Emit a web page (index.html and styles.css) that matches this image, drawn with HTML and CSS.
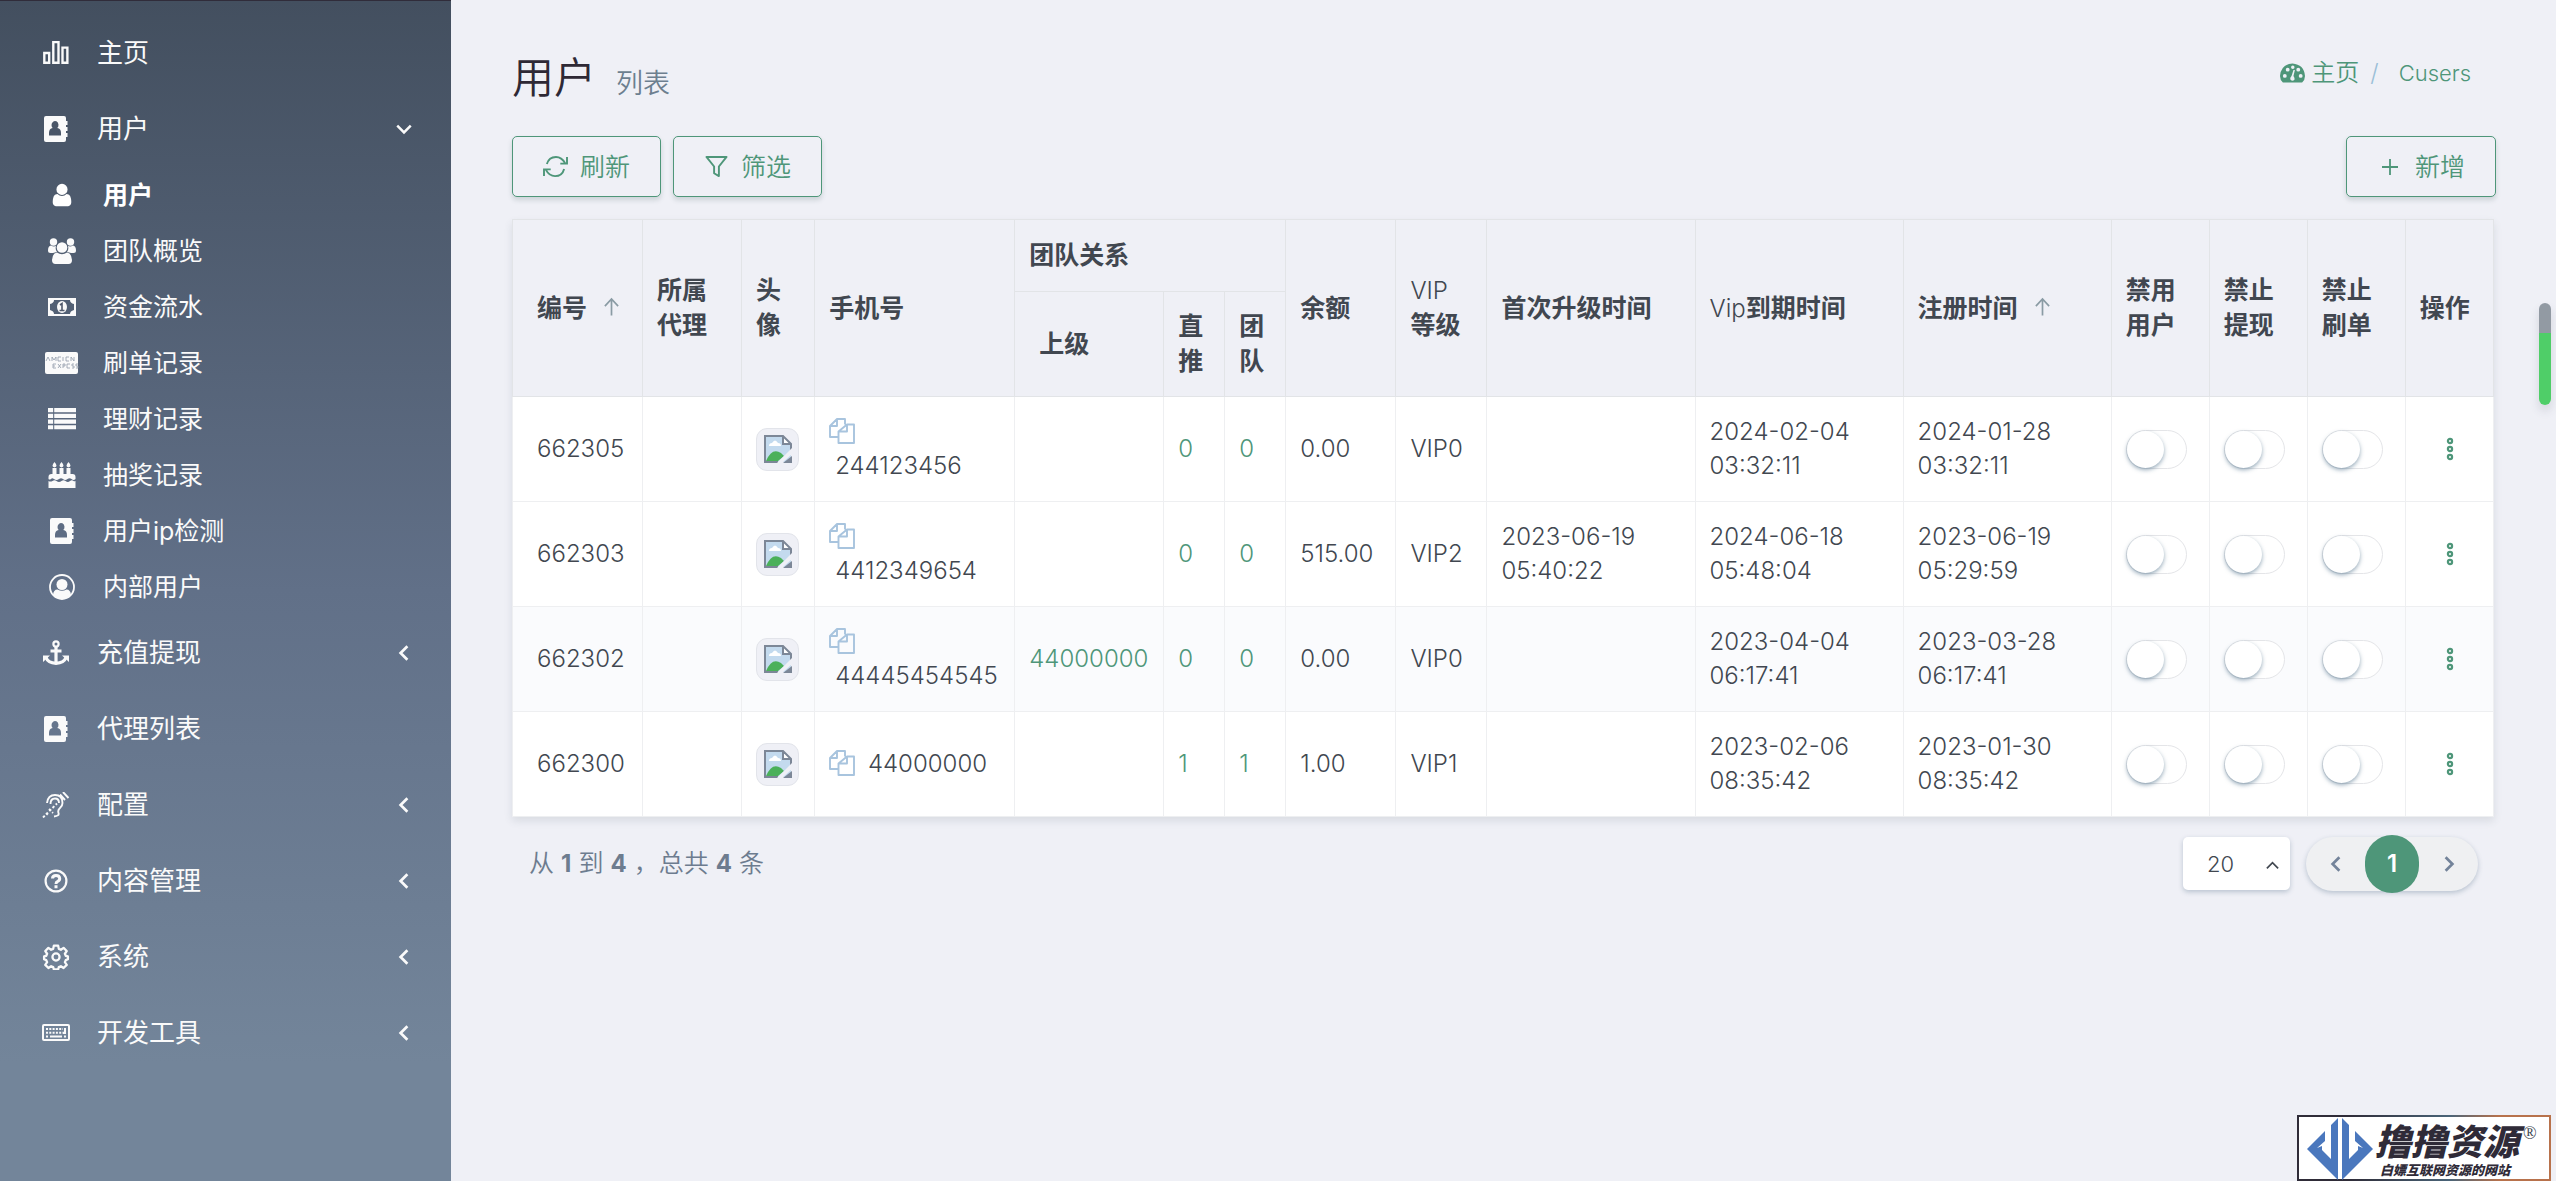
FILE: index.html
```html
<!DOCTYPE html>
<html lang="zh-CN">
<head>
<meta charset="utf-8">
<title>用户</title>
<link rel="stylesheet" href="styles.css">
</head>
<body>
<svg class="sprite" aria-hidden="true">
  <symbol id="i-chart" viewBox="0 0 24 24"><g fill="none" stroke="currentColor" stroke-width="2.200"><path d="M1.200 12h4.500v9H1.200zM9.500 2h4.800v19H9.500zM18 7h4.500v14H18z"/></g></symbol>
  <symbol id="i-book" viewBox="0 0 26 26"><path fill="currentColor" fill-rule="evenodd" d="M3 0h18q2 0 2 2v3h1.500v4H23v2h1.500v4H23v2h1.500v4H23v3q0 2-2 2H3q-2 0-2-2V2Q1 0 3 0zM8.500 9a3.500 4 0 0 0 1.200 3Q6 12.500 6 17v2.500h12V17q0-4.500-3.700-5A3.500 4 0 1 0 8.500 9z"/></symbol>
  <symbol id="i-user" viewBox="0 0 1792 1792"><path fill="currentColor" d="M1536 1399q0 109-62.500 187t-150.500 78h-854q-88 0-150.500-78t-62.500-187q0-85 8.500-160.500t31.500-152 58.500-131 94-89 134.500-34.500q131 128 313 128t313-128q76 0 134.500 34.500t94 89 58.500 131 31.500 152 8.500 160.500zm-256-887q0 159-112.500 271.500t-271.500 112.500-271.500-112.500-112.500-271.500 112.500-271.500 271.500-112.500 271.500 112.500 112.500 271.500z"/></symbol>
  <symbol id="i-users" viewBox="0 0 28 26"><g fill="currentColor"><circle cx="5.500" cy="4" r="3.700"/><circle cx="22.500" cy="4" r="3.700"/><circle cx="14" cy="9.500" r="5.300"/><path d="M3 7.500q2.500 1.500 5 .5-1 3.500 1 6Q6.500 14.500 5 15H2.500Q0 15 0 12.500 0 8 3 7.500zM25 7.500q-2.500 1.500-5 .5 1 3.500-1 6 2.500.5 4 1h2.500Q28 15 28 12.500 28 8 25 7.500zM9 14.500q5 3.500 10 0 4.500.5 5 7.500 0 4-3.500 4h-13Q4 26 4 22q.5-7 5-7.500z"/></g></symbol>
  <symbol id="i-money" viewBox="0 0 28 20"><path fill="currentColor" fill-rule="evenodd" d="M0 1h28v18H0zM6 3q0 3-4 4v6q4 1 4 4h16q0-3 4-4V7q-4-1-4-4z"/><ellipse cx="14" cy="10" rx="5" ry="6" fill="currentColor"/><path d="M11.500 13.500h5M14 13V6.500l-2 1.500" stroke="#50596b" stroke-width="1.600" fill="none"/></symbol>
  <symbol id="i-card" viewBox="0 0 34 22"><rect width="33" height="22" rx="2" fill="currentColor"/><path d="M1 9l2-4 2 4M7 9V5l2 3 2-3v4M16 5h-3v4h3M18 5v4M24 5h-3v4h3M26 9V5l3 4V5M8 16v-4h3M8 14h2M8 16h3M13 12l3 4M16 12l-3 4M18 16v-4h2v2h-2M25 12h-3v4h3M29 12h-2v2h2v2h-2M33 12h-2v2h2v2h-2" stroke="#8f9aa8" fill="none" stroke-width=".8"/></symbol>
  <symbol id="i-list" viewBox="0 0 27 21"><path fill="currentColor" d="M0 0h5v4H0zM6 0h21v4H6zM0 5.500h5v4H0zM6 5.500h21v4H6zM0 11h5v4H0zM6 11h21v4H6zM0 16.500h5v4H0zM6 16.500h21v4H6z"/></symbol>
  <symbol id="i-cake" viewBox="0 0 27 26"><path fill="currentColor" d="M4 6h4v6h3V6h4v6h3V6h4v6h2q3 0 3 3v2q-2 2-4 0-2-1.500-4 0-2.500 2-4.500 0-2-1.500-4 0-2.500 2-5 0-2-1.500-3 0-1.500 1-2.500 0v-2q0-3 3-3h1zM0 19q2 1 4 0 2-1.500 4 0 2.500 2 5 0 2-1.500 4 0 2.500 2 4.500 0 2-1.500 3.500 0 1 .5 2 0v7H0zM6 0q4 4.500 0 5.500Q2 4.500 6 0zM13 0q4 4.500 0 5.500Q9 4.500 13 0zM20 0q4 4.500 0 5.500-4-1 0-5.500z"/></symbol>
  <symbol id="i-circle" viewBox="0 0 26 26"><circle cx="13" cy="13" r="12" fill="none" stroke="currentColor" stroke-width="1.800"/><circle cx="13" cy="10.500" r="5.500" fill="currentColor"/><path fill="currentColor" d="M4 21q.5-5.500 4.500-5.500 4.500 2.500 9 0 4 0 4.500 5.500-4 4-9 4t-9-4z"/></symbol>
  <symbol id="i-anchor" viewBox="0 0 26 26"><g fill="none" stroke="currentColor" stroke-width="3.200"><circle cx="13" cy="4" r="2.600" stroke-width="2.200"/><path d="M13 7v16M7.500 11h11M3 17.500q2 5.500 10 5.800 8-.3 10-5.800"/></g><path fill="currentColor" d="M0 15.500h7L0 22zM26 15.500h-7l7 6.500z"/></symbol>
  <symbol id="i-ear" viewBox="0 0 26 26"><g fill="none" stroke="currentColor" stroke-width="1.900"><path d="M4 11q1-8 8-8 7.500 0 7.500 8 0 3-2.500 5t-1.500 5-4.500 3.500M7.500 12q0-5.500 4.500-5.500 4 0 4 4.500M17 2.500l5 5.500M20 0l5.500 6"/><path stroke-dasharray="2.500 2" d="M0 25.500L14 11.500M6 17l4 4M3 21l3 3"/></g></symbol>
  <symbol id="i-help" viewBox="0 0 26 26"><g fill="none" stroke="currentColor"><circle cx="13" cy="13" r="10.400" stroke-width="2.200"/><path d="M9.500 10.500q0-3 3.500-3t3.700 3q0 2-2 2.800-1.700.7-1.700 2.700M13 17.300v3" stroke-width="3"/></g></symbol>
  <symbol id="i-gear" viewBox="0 0 24 24"><g fill="none" stroke="currentColor" stroke-width="2.100" stroke-linejoin="round"><circle cx="12" cy="12" r="3.300"/><path d="M10 1.500h4l.6 3 1.900.8 2.500-1.700 2.900 2.900-1.700 2.500.8 1.900 2 .6v2.500l-2 .9-.8 1.900 1.700 2.500-2.900 2.900-2.500-1.700-1.900.8-.6 2.200h-4l-.6-2.200-1.900-.8L5 22.200l-2.900-2.900 1.700-2.500-.8-1.900-2-.9v-2.500l2-.6.8-1.900L2.100 6.500 5 3.600l2.500 1.700 1.900-.8z"/></g></symbol>
  <symbol id="i-keys" viewBox="0 0 28 18"><rect x="1" y="1" width="26" height="15" rx="1" fill="none" stroke="currentColor" stroke-width="2"/><path stroke="currentColor" stroke-width="2" stroke-dasharray="2 1.300" d="M4 5h17M4 8.700h18M4 12.500h3M22 12.500h2.500"/><path stroke="currentColor" stroke-width="2" fill="none" d="M8 12.500h12M23 4v5h-2"/></symbol>
  <symbol id="i-down" viewBox="0 0 16 16"><path d="M2 5l6 6 6-6" fill="none" stroke="currentColor" stroke-width="2.200"/></symbol>
  <symbol id="i-up" viewBox="0 0 16 16"><path d="M2 11l6-6 6 6" fill="none" stroke="currentColor" stroke-width="1.800"/></symbol>
  <symbol id="i-left" viewBox="0 0 16 16"><path d="M11 2L5 8l6 6" fill="none" stroke="currentColor" stroke-width="2.400"/></symbol>
  <symbol id="i-right" viewBox="0 0 16 16"><path d="M5 2l6 6-6 6" fill="none" stroke="currentColor" stroke-width="2.400"/></symbol>
  <symbol id="i-sort" viewBox="0 0 18 20"><path d="M9 19V1.500M2 9l7-7.500L16 9" fill="none" stroke="currentColor" stroke-width="1.800"/></symbol>
  <symbol id="i-refresh" viewBox="0 0 26 24"><path d="M4 9.500Q6 2 13.500 2q6 0 9.500 6.500M25 2v7h-7M22 14.500Q20 22 12.500 22q-6 0-9.500-6.500M1 22v-7h7" fill="none" stroke="currentColor" stroke-width="2"/></symbol>
  <symbol id="i-filter" viewBox="0 0 24 24"><path d="M1.500 2h21l-8 10v10l-5-3v-7z" fill="none" stroke="currentColor" stroke-width="2" stroke-linejoin="round"/></symbol>
  <symbol id="i-plus" viewBox="0 0 18 18"><path d="M9 1v16M1 9h16" stroke="currentColor" stroke-width="1.800"/></symbol>
  <symbol id="i-dash" viewBox="0 0 26 20"><path fill="currentColor" fill-rule="evenodd" d="M3 20Q0 17 0 13 1 1 13 0q12 1 13 13 0 4-3 7zM3 13a2 2 0 1 0 4 0 2 2 0 1 0-4 0zM6 6.500a2 2 0 1 0 4 0 2 2 0 1 0-4 0zM11.500 4a1.800 1.800 0 1 0 3.600 0 1.800 1.800 0 1 0-3.600 0zM17 6.500a2 2 0 1 0 4 0 2 2 0 1 0-4 0zM19.500 13a2 2 0 1 0 4 0 2 2 0 1 0-4 0zM14 7l-2 6q-2 2-1 4 2 2 4 0 .5-2-1-4l1.500-6z"/></symbol>
  <symbol id="i-copy" viewBox="0 0 26 26"><g fill="none" stroke="currentColor" stroke-width="1.900" stroke-linejoin="round"><path d="M9.500 19H1V8l7-7h8v5.500M8 1v7H1M18 6.500h7V25H9.500V13.500zM18 6.500v7H9.500"/></g></symbol>
  <symbol id="i-dots" viewBox="0 0 8 24"><g fill="none" stroke="currentColor" stroke-width="2.200"><circle cx="4" cy="4" r="2.100"/><circle cx="4" cy="12" r="2.100"/><circle cx="4" cy="20" r="2.100"/></g></symbol>
  <symbol id="i-broken" viewBox="0 0 28 28"><path fill="#c3daee" d="M1 1h18l8 8v18H1z"/><path fill="#4bb05a" d="M2 26q6-14 15-8l3 3-6 5z"/><path fill="#fff" d="M5 11q0-3 3-3 3-5 6 0 3 0 3 3zM19 1v8h8z"/><path fill="none" stroke="#7c8797" stroke-width="2" d="M14 27H1V1h18l8 8v6M19 1v8h8"/><path fill="#7c8797" d="M28 21v7h-9z"/><path fill="#eff0f6" d="M28 13v6l-10 9h-5z"/></symbol>
</svg>
<div class="app">
  <nav class="sidebar" aria-label="主菜单">
    <a class="item" href="#"><svg class="icon"><use href="#i-chart"/></svg><span>主页</span></a>
    <a class="item" href="#"><svg class="icon"><use href="#i-book"/></svg><span>用户</span><svg class="arrow"><use href="#i-down"/></svg></a>
    <a class="item sub active" href="#"><svg class="icon"><use href="#i-user"/></svg><span>用户</span></a>
    <a class="item sub" href="#"><svg class="icon"><use href="#i-users"/></svg><span>团队概览</span></a>
    <a class="item sub" href="#"><svg class="icon"><use href="#i-money"/></svg><span>资金流水</span></a>
    <a class="item sub" href="#"><svg class="icon wide"><use href="#i-card"/></svg><span>刷单记录</span></a>
    <a class="item sub" href="#"><svg class="icon"><use href="#i-list"/></svg><span>理财记录</span></a>
    <a class="item sub" href="#"><svg class="icon"><use href="#i-cake"/></svg><span>抽奖记录</span></a>
    <a class="item sub" href="#"><svg class="icon"><use href="#i-book"/></svg><span>用户ip检测</span></a>
    <a class="item sub" href="#"><svg class="icon"><use href="#i-circle"/></svg><span>内部用户</span></a>
    <a class="item" href="#"><svg class="icon"><use href="#i-anchor"/></svg><span>充值提现</span><svg class="arrow"><use href="#i-left"/></svg></a>
    <a class="item" href="#"><svg class="icon"><use href="#i-book"/></svg><span>代理列表</span></a>
    <a class="item" href="#"><svg class="icon"><use href="#i-ear"/></svg><span>配置</span><svg class="arrow"><use href="#i-left"/></svg></a>
    <a class="item" href="#"><svg class="icon"><use href="#i-help"/></svg><span>内容管理</span><svg class="arrow"><use href="#i-left"/></svg></a>
    <a class="item" href="#"><svg class="icon"><use href="#i-gear"/></svg><span>系统</span><svg class="arrow"><use href="#i-left"/></svg></a>
    <a class="item" href="#"><svg class="icon"><use href="#i-keys"/></svg><span>开发工具</span><svg class="arrow"><use href="#i-left"/></svg></a>
  </nav>
  <main class="content">
    <header class="page-head">
      <h1>用户<small>列表</small></h1>
      <div class="crumbs"><a href="#"><svg class="dash"><use href="#i-dash"/></svg>主页</a><span class="slash">/</span><a href="#">Cusers</a></div>
    </header>
    <div class="toolbar">
      <button class="btn" type="button"><svg><use href="#i-refresh"/></svg>刷新</button>
      <button class="btn" type="button"><svg><use href="#i-filter"/></svg>筛选</button>
      <button class="btn add" type="button"><svg><use href="#i-plus"/></svg>新增</button>
    </div>
    <table class="grid">
      <colgroup><col class="w130"><col class="w99"><col class="w73"><col class="w200"><col class="w149"><col class="w61"><col class="w61"><col class="w110"><col class="w91"><col class="w208"><col class="w208"><col class="w208"><col class="w98"><col class="w98"><col class="w98"><col class="w88"></colgroup>
      <thead>
        <tr class="h1"><th rowspan="2">编号<svg class="sort"><use href="#i-sort"/></svg></th><th rowspan="2">所属代理</th><th rowspan="2">头像</th><th rowspan="2">手机号</th><th colspan="3">团队关系</th><th rowspan="2">余额</th><th rowspan="2"><span class="latin">VIP</span><br>等级</th><th rowspan="2">首次升级时间</th><th rowspan="2"><span class="latin">Vip</span>到期时间</th><th rowspan="2">注册时间<svg class="sort"><use href="#i-sort"/></svg></th><th rowspan="2">禁用用户</th><th rowspan="2">禁止提现</th><th rowspan="2">禁止刷单</th><th rowspan="2">操作</th></tr>
        <tr class="h2"><th class="parent">上级</th><th>直推</th><th>团队</th></tr>
      </thead>
      <tbody>
        <tr><td>662305</td><td></td><td><span class="avatar"><svg><use href="#i-broken"/></svg></span></td><td><a class="copy" href="#" aria-label="复制"><svg><use href="#i-copy"/></svg></a><br><span class="phone">244123456</span></td><td></td><td><a href="#">0</a></td><td><a href="#">0</a></td><td>0.00</td><td>VIP0</td><td></td><td>2024-02-04 03:32:11</td><td>2024-01-28 03:32:11</td><td><input type="checkbox" class="switch" aria-label="禁用用户"></td><td><input type="checkbox" class="switch" aria-label="禁止提现"></td><td><input type="checkbox" class="switch" aria-label="禁止刷单"></td><td><button class="more" type="button" aria-label="操作"><svg><use href="#i-dots"/></svg></button></td></tr>
        <tr><td>662303</td><td></td><td><span class="avatar"><svg><use href="#i-broken"/></svg></span></td><td><a class="copy" href="#" aria-label="复制"><svg><use href="#i-copy"/></svg></a><br><span class="phone">4412349654</span></td><td></td><td><a href="#">0</a></td><td><a href="#">0</a></td><td>515.00</td><td>VIP2</td><td>2023-06-19 05:40:22</td><td>2024-06-18 05:48:04</td><td>2023-06-19 05:29:59</td><td><input type="checkbox" class="switch" aria-label="禁用用户"></td><td><input type="checkbox" class="switch" aria-label="禁止提现"></td><td><input type="checkbox" class="switch" aria-label="禁止刷单"></td><td><button class="more" type="button" aria-label="操作"><svg><use href="#i-dots"/></svg></button></td></tr>
        <tr class="hover"><td>662302</td><td></td><td><span class="avatar"><svg><use href="#i-broken"/></svg></span></td><td><a class="copy" href="#" aria-label="复制"><svg><use href="#i-copy"/></svg></a><br><span class="phone">44445454545</span></td><td><a href="#">44000000</a></td><td><a href="#">0</a></td><td><a href="#">0</a></td><td>0.00</td><td>VIP0</td><td></td><td>2023-04-04 06:17:41</td><td>2023-03-28 06:17:41</td><td><input type="checkbox" class="switch" aria-label="禁用用户"></td><td><input type="checkbox" class="switch" aria-label="禁止提现"></td><td><input type="checkbox" class="switch" aria-label="禁止刷单"></td><td><button class="more" type="button" aria-label="操作"><svg><use href="#i-dots"/></svg></button></td></tr>
        <tr><td>662300</td><td></td><td><span class="avatar"><svg><use href="#i-broken"/></svg></span></td><td><a class="copy" href="#" aria-label="复制"><svg><use href="#i-copy"/></svg></a> <span class="phone">44000000</span></td><td></td><td><a href="#">1</a></td><td><a href="#">1</a></td><td>1.00</td><td>VIP1</td><td></td><td>2023-02-06 08:35:42</td><td>2023-01-30 08:35:42</td><td><input type="checkbox" class="switch" aria-label="禁用用户"></td><td><input type="checkbox" class="switch" aria-label="禁止提现"></td><td><input type="checkbox" class="switch" aria-label="禁止刷单"></td><td><button class="more" type="button" aria-label="操作"><svg><use href="#i-dots"/></svg></button></td></tr>
      </tbody>
    </table>
    <footer class="table-foot">
      <p>从 <b>1</b> 到 <b>4</b> ，总共 <b>4</b> 条</p>
      <div class="per-page"><select aria-label="每页条数"><option>20</option></select><svg><use href="#i-up"/></svg></div>
      <div class="pager"><button type="button" aria-label="上一页"><svg><use href="#i-left"/></svg></button><button type="button" class="current">1</button><button type="button" aria-label="下一页"><svg><use href="#i-right"/></svg></button></div>
    </footer>
  </main>
</div>
<div class="scroll-mark"></div>
<aside class="brand">
  <svg class="brand-logo" viewBox="0 0 66 62"><g fill="#4a77bd"><path d="M31 0v62L0 31l18-18v10l-8 7 5-2v4l9 9V7zM35 0v62l31-31-18-18v10l8 7-5-2v4l-9 9V7z"/></g></svg>
  <div class="brand-text"><strong>撸撸资源</strong><em>白嫖互联网资源的网站</em></div>
  <span class="reg">®</span>
</aside>
</body>
</html>
```
FILE: styles.css
```css
* { box-sizing: border-box; }
body { margin: 0; background: #eff0f6; color: #414750; font: 24px/34px Inter, "Noto Sans CJK SC", sans-serif; }
a { color: #4e9679; text-decoration: none; }
button { font: inherit; color: inherit; cursor: pointer; }
.sprite { position: absolute; width: 0; height: 0; }
.app { display: flex; min-height: 100vh; }

.sidebar { flex: 0 0 451px; padding-top: 14px; border-top: 1px solid #302c3a; background: linear-gradient(#434f5f, #617088 50%, #73859a 90%); }
.item { display: flex; align-items: center; height: 76px; padding: 0 38px 0 42px; color: #fafafa; font-size: 26px; }
.item .icon { width: 28px; height: 26px; margin-right: 27px; }
.item .arrow { width: 18px; height: 18px; margin-left: auto; }
.item.sub { height: 56px; padding-left: 48px; font-size: 25px; }
.item .icon.wide { width: 34px; margin: 0 24px 0 -3px; }
.item.active { font-weight: 700; color: #fff; }

.content { flex: 1; min-width: 0; padding: 48px 62px 40px 61px; }
.page-head { display: flex; justify-content: space-between; align-items: center; height: 66px; padding-right: 23px; }
h1 { margin: 0; font-size: 42px; line-height: 66px; font-weight: 350; color: #2e2935; }
h1 small { margin-left: 20px; font-size: 27px; color: #6d7f8f; }
.crumbs { display: flex; align-items: center; height: 40px; padding-bottom: 16px; }
.crumbs a { font-size: 24px; font-weight: 350; }
.crumbs a:last-child { font-size: 22px; }
.dash { width: 25px; height: 20px; margin-right: 6px; vertical-align: -2px; }
.slash { margin: 0 20px 0 11px; color: #9bbfd8; font-weight: 300; }
.toolbar { display: flex; gap: 12px; padding: 22px 0; }
.btn { display: flex; align-items: center; gap: 12px; height: 61px; padding: 0 30px; border: 1px solid #4e9679; border-radius: 5px; background: #eff0f6; color: #4e9679; font-size: 25px; font-weight: 350; box-shadow: 0 3px 5px rgba(60, 90, 90, .2); }
.btn svg { width: 25px; height: 23px; }
.add { margin-left: auto; padding-left: 34px; margin-right: -2px; }
.add svg { width: 18px; height: 18px; margin-right: 4px; }

.grid { width: 100%; table-layout: fixed; border-collapse: collapse; background: #fff; box-shadow: 0 4px 8px rgba(60, 70, 90, .12); }
.w130 { width: 130px; } .w99 { width: 99px; } .w73 { width: 73px; } .w200 { width: 200px; } .w149 { width: 149px; }
.w61 { width: 61px; } .w110 { width: 110px; } .w91 { width: 91px; } .w208 { width: 208px; } .w98 { width: 98px; } .w88 { width: 88px; }
th, td { padding: 0 14px; border: 1px solid #eeeff1; text-align: left; vertical-align: middle; font-weight: 300; }
th { background: #eff0f6; border-color: #e2e4e7; font-size: 25px; line-height: 35px; font-weight: 700; }
.latin { font-weight: 300; font-size: 24px; }
.h1 { height: 72px; } .h2 { height: 105px; }
.grid tr > :first-child:not(.parent) { padding-left: 24px; padding-right: 0; }
.parent { padding-left: 24px; }
tbody tr { height: 105px; }
.hover td { background: #fafbfd; }
.sort { width: 17px; height: 20px; margin-left: 16px; color: #8a9ba4; }
.avatar { display: grid; place-items: center; width: 43px; height: 43px; border: 1px solid #e2e4ea; border-radius: 11px; background: #eff0f6; }
.avatar svg { width: 28px; height: 28px; }
.copy svg { width: 26px; height: 26px; vertical-align: -4px; color: #a8c4de; }
.phone { margin-left: 6px; }
.switch { appearance: none; display: block; width: 61px; height: 39px; margin: 0; border: 1px solid #e4e5e8; border-radius: 20px; background: #fff; cursor: pointer; }
.switch::before { content: ""; display: block; width: 37px; height: 37px; border-radius: 50%; background: #fff; box-shadow: 0 2px 4px rgba(50, 90, 120, .5); }
.more { display: block; margin-left: 25px; padding: 0; border: 0; background: none; color: #4e9679; }
.more svg { display: block; width: 10px; height: 24px; }

.table-foot { display: flex; align-items: center; padding: 17px 16px 0 17px; height: 76px; }
.table-foot p { margin: 0; font-size: 25px; font-weight: 350; color: #6d7c8f; }
.table-foot b { font-size: 24px; font-weight: 700; }
.per-page { position: relative; margin: 0 16px 0 auto; }
.per-page select { appearance: none; width: 107px; height: 53px; padding-left: 24px; border: 0; border-radius: 5px; background: #fff; font: inherit; font-size: 22px; font-weight: 300; color: #414750; box-shadow: 0 2px 5px rgba(60, 90, 120, .3); }
.per-page svg { position: absolute; right: 10px; top: 21px; width: 15px; height: 15px; pointer-events: none; }
.pager { display: flex; align-items: center; height: 54px; border-radius: 27px; background: #eff0f2; box-shadow: 0 2px 5px rgba(60, 90, 120, .3); }
.pager button { display: grid; place-items: center; width: 59px; height: 58px; padding: 0; border: 0; background: none; color: #73839a; }
.pager svg { width: 18px; height: 18px; }
.pager .current { width: 54px; border-radius: 27px; background: #4e9679; color: #fff; font-size: 24px; font-weight: 600; }

.scroll-mark { position: fixed; right: 5px; top: 303px; width: 12px; height: 102px; border-radius: 6px; background: linear-gradient(#929aa3 30px, #4fce68 30px); box-shadow: 0 6px 10px rgba(60, 70, 90, .15); }
.brand { position: fixed; right: 5px; bottom: 0; display: flex; width: 254px; height: 66px; padding: 1px 0 0 8px; border: 2px solid; border-image: linear-gradient(90deg, #2f2c38 20%, #4a6478 60%, #b8724c 80%) 1; background: #fff; }
.brand-logo { flex: none; width: 66px; height: 62px; }
.brand-text { display: flex; flex: none; flex-direction: column; padding-left: 2px; color: #2f2b38; }
.brand strong { font-size: 36px; line-height: 42px; font-weight: 900; font-style: italic; padding-top: 3px; }
.brand em { padding-left: 5px; font-size: 13px; line-height: 14px; font-weight: 900; }
.reg { margin-left: 4px; font: 18px/30px "Liberation Serif", serif; }
```
